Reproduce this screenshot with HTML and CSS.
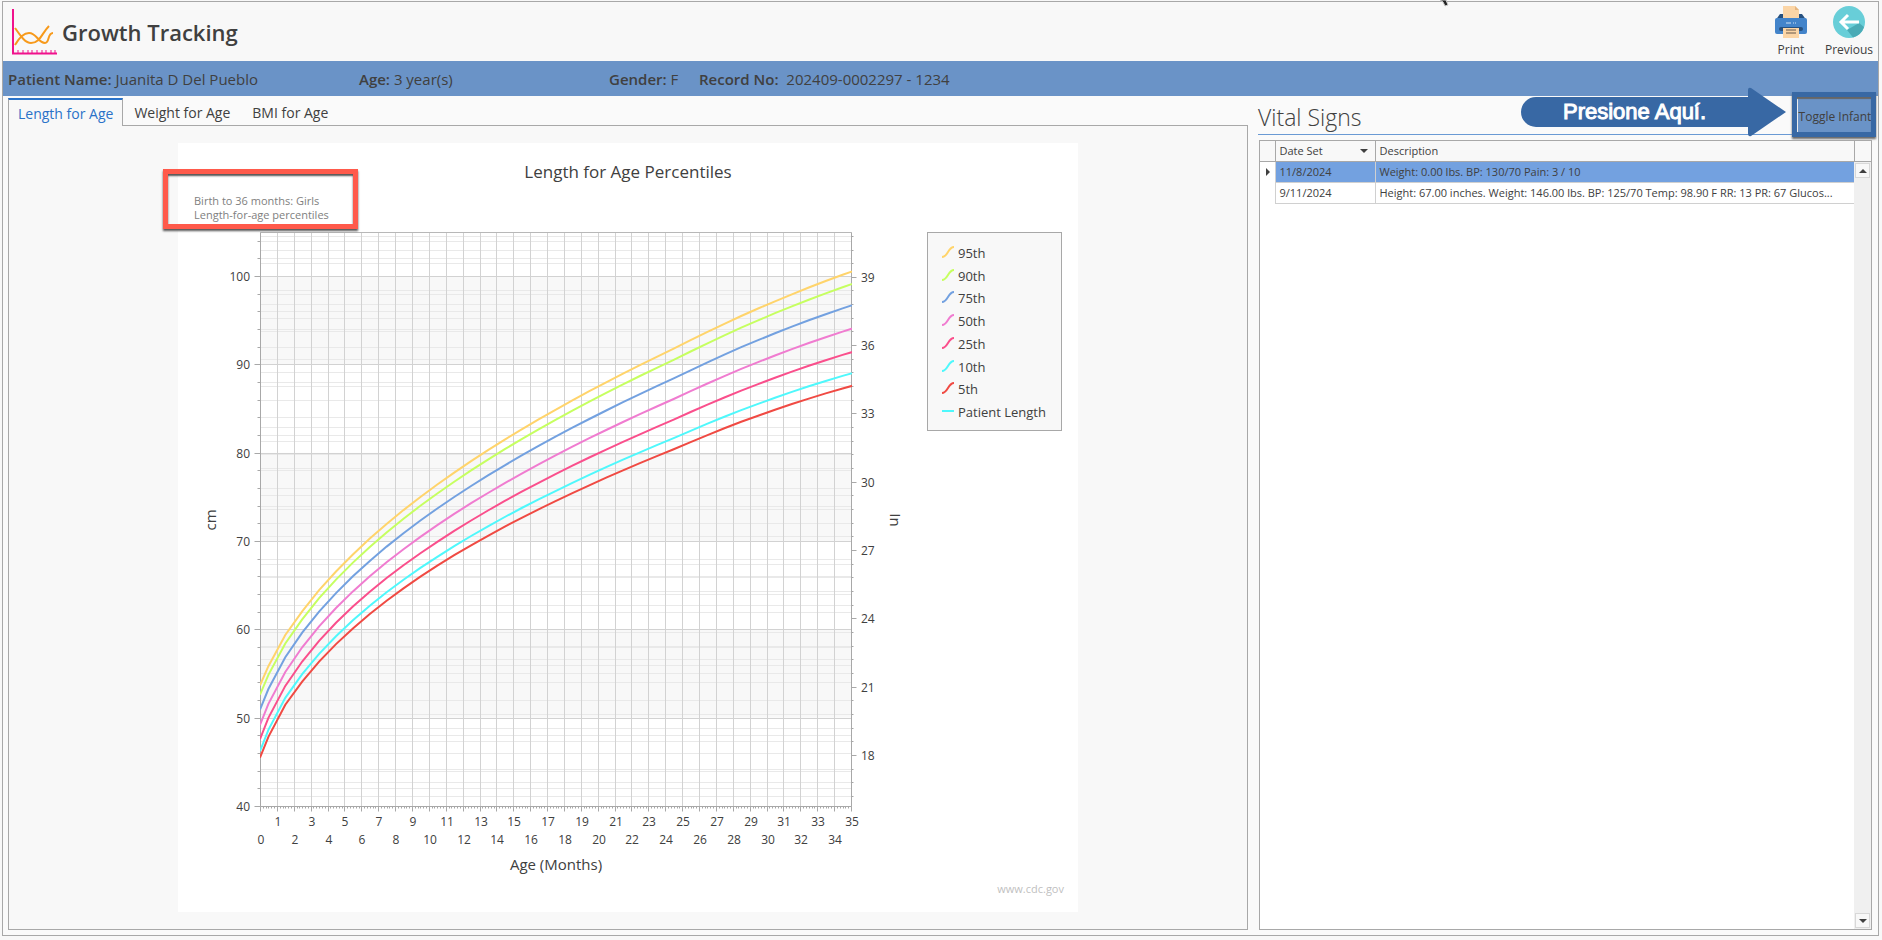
FILE: index.html
```html
<!DOCTYPE html>
<html lang="en">
<head>
<meta charset="utf-8">
<title>Growth Tracking</title>
<link rel="stylesheet" href="styles.css">
</head>
<body>
<div class="window">
    <header class="header">
        <svg class="logo" width="46" height="46" viewBox="0 0 46 46">
            <path d="M1 0V44.500H45" fill="none" stroke="#f0128c" stroke-width="2"/>
            <path d="M6 41v4M11 41v4M16 41v4M20 41v4M25 41v4M30 41v4M34 41v4M39 41v4M43 41v4" stroke="#f0128c" stroke-width="1"/>
            <path d="M3 19C8 26 13 34 19 34C28 34 30 24 37 17M3 36C7 29 11 24 17 24C25 24 26 34 33 34C38 34 35 24 41 24" fill="none" stroke="#f79a1c" stroke-width="2"/>
        </svg>
        <h1>Growth Tracking</h1>
        <button class="tool">
            <svg width="32" height="32" viewBox="0 0 32 32">
                <path d="M5 8h22l5 7H0z" fill="#27517f"/>
                <path d="M8 0h12l4 4v8H8z" fill="#fbd5a6"/>
                <path d="M20 0v4h4z" fill="#e5b57f"/>
                <path d="M0 14q0-2 2-2h28q2 0 2 2v12q0 2-2 2H2q-2 0-2-2z" fill="#4384ca"/>
                <path d="M11 17h5M18 17h1M20 17h1" stroke="#cfe2f5"/>
                <rect x="4" y="21" width="24" height="4" rx="2" fill="#27517f"/>
                <path d="M8 22h16v10H8z" fill="#fbd5a6"/>
                <path d="M11 24h10M11 27h10" stroke="#66594c"/>
            </svg>
            Print
        </button>
        <button class="tool">
            <svg width="32" height="32" viewBox="0 0 32 32">
                <circle cx="16" cy="16" r="16" fill="#68ced8"/>
                <path d="M14 24L26 17L31 21A16 16 0 0 1 20 31.500z" fill="#4aabb6"/>
                <path d="M26 16H8M15 9L8 16L15 23" fill="none" stroke="#fff" stroke-width="3"/>
            </svg>
            Previous
        </button>
    </header>

    <div class="patient-bar">
        <div class="patient-name"><b>Patient Name:</b> Juanita D Del Pueblo</div>
        <div class="patient-age"><b>Age:</b> 3 year(s)</div>
        <div class="patient-gender"><b>Gender:</b> F</div>
        <div><b>Record No:</b>&nbsp; 202409-0002297 - 1234</div>
    </div>

    <main class="content">
        <section class="charts">
            <nav class="tabs">
                <button class="tab active">Length for Age</button>
                <button class="tab">Weight for Age</button>
                <button class="tab">BMI for Age</button>
            </nav>
            <div class="pane">
                <div class="card">
                    <svg id="chart" viewBox="0 0 900 769"></svg>
                    <div class="mark"></div>
                </div>
            </div>
        </section>

        <section class="vitals">
            <div class="vitals-head">
                <h2>Vital Signs</h2>
                <button class="toggle">Toggle Infant</button>
                <div class="toggle-mark"></div>
                <div class="callout">
                    <svg width="267" height="50" viewBox="0 0 267 50">
                        <path d="M16 10H228V3Q228 0 231 1L266 25L231 49Q228 50 228 46V40H16A15 15 0 0 1 16 10z" fill="#3868a4"/>
                    </svg>
                    <span>Presione Aquí.</span>
                </div>
            </div>
            <div class="grid">
                <table>
                    <thead>
                        <tr>
                            <th class="pointer"></th>
                            <th class="date">Date Set <i class="down"></i></th>
                            <th>Description</th>
                            <th class="end"></th>
                        </tr>
                    </thead>
                    <tbody>
                        <tr class="selected">
                            <td class="pointer"><i class="right"></i></td>
                            <td>11/8/2024</td>
                            <td>Weight: 0.00 lbs. BP: 130/70 Pain: 3 / 10</td>
                            <td class="end"></td>
                        </tr>
                        <tr>
                            <td class="pointer"></td>
                            <td>9/11/2024</td>
                            <td>Height: 67.00 inches. Weight: 146.00 lbs. BP: 125/70 Temp: 98.90 F RR: 13 PR: 67 Glucos...</td>
                            <td class="end"></td>
                        </tr>
                    </tbody>
                </table>
                <div class="scrollbar">
                    <button aria-label="Scroll up"><i class="up"></i></button>
                    <button aria-label="Scroll down"><i class="down"></i></button>
                </div>
            </div>
        </section>
    </main>
</div>
<svg class="cursor" width="12" height="7" viewBox="0 0 12 7"><path d="M2 0L5 2L7 6L10 5L8 0z" fill="#222" stroke="#ccc"/></svg>
<script src="chart.js"></script>
</body>
</html>
```
FILE: styles.css
```css
* {
    box-sizing: border-box;
}

body {
    margin: 0;
    min-height: 100vh;
    padding: 1px 3px 4px 2px;
    display: flex;
    background: #f8f8f8;
    color: #404040;
    font-family: "Open Sans", "Noto Sans", sans-serif;
    font-size: 12px;
}

button {
    font: inherit;
    color: inherit;
    border: 0;
    padding: 0;
    background: none;
    cursor: pointer;
}

.window {
    flex: 1;
    min-width: 0;
    display: flex;
    flex-direction: column;
    border: 1px solid #a8a8a8;
    background: #fafafa;
}

.header {
    display: flex;
    align-items: flex-start;
    height: 59px;
    padding: 4px 0 0 9px;
    background: #f8f8f8;
}

.logo {
    margin-top: 3px;
}

.header h1 {
    flex: 1;
    margin: 9px 0 0 4px;
    font-size: 22px;
    line-height: 34px;
    font-weight: 600;
}

.tool {
    width: 58px;
    display: flex;
    flex-direction: column;
    align-items: center;
    gap: 2px;
    line-height: 20px;
}

.patient-bar {
    display: flex;
    align-items: center;
    height: 35px;
    padding: 0 5px;
    background: #6a93c7;
    font-size: 15px;
    white-space: nowrap;
}

.patient-bar b {
    font-weight: 600;
}

.patient-name {
    width: 351px;
}

.patient-age {
    width: 250px;
}

.patient-gender {
    width: 90px;
}

.content {
    flex: 1;
    display: flex;
    gap: 10px;
    padding: 2px 5px 5px;
}

.charts {
    flex: 1240;
    min-width: 0;
    display: flex;
    flex-direction: column;
}

.tabs {
    display: flex;
    height: 28px;
}

.tab {
    padding: 0 11px;
    font-size: 14px;
}

.tab.active {
    height: 28px;
    margin-bottom: -1px;
    padding: 0 9px;
    border: 1px solid #a8a8a8;
    border-top: 2px solid #2a72c8;
    border-bottom: 0;
    background: #f8f8f8;
    color: #2a72c8;
    position: relative;
}

.pane {
    flex: 1;
    margin-top: -1px;
    padding: 17px 0 16px;
    border: 1px solid #a8a8a8;
    background: #f8f8f8;
}

.card {
    position: relative;
    max-width: 900px;
    margin: 0 auto;
    background: #fff;
}

.card svg {
    display: block;
    width: 100%;
}

/* highlight around the chart subtitle */
.mark {
    position: absolute;
    left: -15px;
    top: 26px;
    width: 195px;
    height: 60px;
    border: 5px solid #ff5a4b;
    box-shadow: 0 2px 2px #555, inset 0 2px 2px #555;
}

.axis-label {
    font-size: 12px;
    fill: #404040;
}

.axis-title {
    font-size: 15px;
    fill: #404040;
}

.chart-title {
    font-size: 17px;
    fill: #404040;
}

.sub-title {
    font-size: 11px;
    fill: #808080;
}

.source {
    font-size: 11px;
    fill: #bfbfbf;
}

.legend {
    font-size: 13px;
    fill: #404040;
}

.vitals {
    flex: 615;
    min-width: 0;
    display: flex;
    flex-direction: column;
}

.vitals-head {
    position: relative;
    display: flex;
    justify-content: space-between;
    height: 37px;
    margin-bottom: 5px;
    padding-right: 1px;
    border-bottom: 1px solid #6a9ad4;
}

.vitals-head h2 {
    margin: 0;
    font-size: 23px;
    line-height: 38px;
    font-weight: 300;
}

.toggle {
    width: 74px;
    height: 36px;
    background: #6a93c7;
    font-size: 12px;
    white-space: nowrap;
}

.toggle-mark {
    position: absolute;
    right: -3px;
    top: -6px;
    width: 84px;
    height: 45px;
    border: 5px solid #3868a4;
    box-shadow: 0 2px 2px #666, inset 0 2px 1px #666;
    pointer-events: none;
}

.callout {
    position: absolute;
    right: 86px;
    top: -11px;
    height: 50px;
}

.callout span {
    position: absolute;
    left: 43px;
    top: 10px;
    color: #fff;
    font-family: "Liberation Sans", sans-serif;
    font-size: 22px;
    line-height: 30px;
    -webkit-text-stroke: 1px #fff;
    white-space: nowrap;
}

.grid {
    flex: 1;
    position: relative;
    margin: 0 1px;
    border: 1px solid #a8a8a8;
    background: #fff;
}

table {
    width: 100%;
    table-layout: fixed;
    border-collapse: collapse;
}

th,
td {
    height: 21px;
    padding: 0 4px;
    overflow: hidden;
    border: 1px solid #d0d0d0;
    border-top: 0;
    font-weight: 400;
    font-size: 11px;
    line-height: 20px;
    text-align: left;
    white-space: nowrap;
    text-overflow: ellipsis;
}

th {
    height: 20px;
    border-color: #a8a8a8;
    background: #f8f8f8;
    line-height: 19px;
}

th:first-child,
td:first-child {
    border-left: 0;
}

.pointer {
    width: 15px;
    padding: 0 0 0 6px;
    text-overflow: clip;
}

.date {
    width: 100px;
}

.date .down {
    float: right;
    margin: 8px 3px 0;
}

.end {
    width: 17px;
    border-right: 0;
}

td.pointer,
td.end {
    border-bottom: 0;
}

.selected td {
    background: #73a1e0;
}

.selected td.pointer {
    background: #fff;
}

.up,
.down,
.right {
    display: inline-block;
    border: 4px solid transparent;
}

.up {
    border-top: 0;
    border-bottom-color: #404040;
}

.down {
    border-bottom: 0;
    border-top-color: #404040;
}

.right {
    border-right: 0;
    border-left-color: #404040;
}

.scrollbar {
    position: absolute;
    right: 0;
    top: 21px;
    bottom: 0;
    width: 17px;
    padding: 1px;
    display: flex;
    flex-direction: column;
    justify-content: space-between;
    background: #f0f0f0;
}

.scrollbar button {
    display: flex;
    align-items: center;
    justify-content: center;
    height: 15px;
    border: 1px solid #d8d8d8;
    background: #f8f8f8;
}

.cursor {
    position: absolute;
    left: 1438px;
    top: 0;
}
```
FILE: chart.js
```js
const chart = document.getElementById("chart");

const plot = { left: 82, right: 673, top: 89, bottom: 663 };

// median length in cm at 0, 0.5, 1.5 ... 35.5 months
const median = [49.29, 51.68, 55.29, 58.09, 60.46, 62.54, 64.41, 66.12, 67.71, 69.19,
    70.59, 71.92, 73.19, 74.40, 75.56, 76.68, 77.76, 78.80, 79.81, 80.80, 81.76, 82.69,
    83.60, 84.48, 85.35, 86.20, 87.09, 87.96, 88.80, 89.61, 90.38, 91.13, 91.85, 92.54,
    93.20, 93.83, 94.43];

// [month, deviation, skew]
const spread = [[0, 2.49, 0.144], [0.5, 2.43, 0.1], [1.5, 2.4, 0.09], [2.5, 2.42, 0.03],
    [5, 2.52, 0], [9, 2.72, 0], [18, 3.17, 0], [36, 3.98, 0]];

const series = [
    { name: "95th", z: 1.645, color: "#ffd46b" },
    { name: "90th", z: 1.282, color: "#c6ff60" },
    { name: "75th", z: 0.674, color: "#73a1e0" },
    { name: "50th", z: 0, color: "#f07cd0" },
    { name: "25th", z: -0.674, color: "#fa4f8c" },
    { name: "10th", z: -1.282, color: "#4ff8fc" },
    { name: "5th", z: -1.645, color: "#f04a43" },
];

let html = "";

function x(month) {
    return plot.left + month * (plot.right - plot.left) / 35;
}

function y(cm) {
    return plot.bottom - (cm - 40) * (plot.bottom - plot.top) / 65;
}

function yInch(inch) {
    return 612 - (inch - 18) * 22.77;
}

function line(x1, y1, x2, y2, color) {
    html += `<path d="M${Math.round(x1) + 0.5} ${Math.round(y1) + 0.5}L${Math.round(x2) + 0.5} ${Math.round(y2) + 0.5}" stroke="${color}"/>`;
}

function text(tx, ty, value, cls, anchor = "middle", extra = "") {
    html += `<text x="${tx}" y="${ty}" class="${cls}" text-anchor="${anchor}" ${extra}>${value}</text>`;
}

function length(month, i, z) {
    let n = 1;
    while (spread[n][0] < month) n++;
    const [m0, d0, s0] = spread[n - 1];
    const [m1, d1, s1] = spread[n];
    const t = (month - m0) / (m1 - m0);
    return median[i] + z * (d0 + t * (d1 - d0)) + z * z * (s0 + t * (s1 - s0));
}

// bands
for (const cm of [60, 80, 100]) {
    html += `<rect x="${plot.left}" y="${y(cm)}" width="${plot.right - plot.left}" height="${y(cm - 10) - y(cm)}" fill="#f8f8f8"/>`;
}

// minor lines and ticks
for (let cm = 42; cm < 105; cm += 2) {
    if (cm % 10) {
        line(plot.left, y(cm), plot.right, y(cm), "#e9e9e9");
        line(plot.left - 3, y(cm), plot.left, y(cm), "#a8a8a8");
    }
}
for (let i = -3; i < 39; i++) {
    const py = yInch(18 + i * 0.6);
    if (i % 5) {
        line(plot.left, py, plot.right, py, "#e9e9e9");
        line(plot.right, py, plot.right + 2, py, "#a8a8a8");
    } else {
        line(plot.right, py, plot.right + 5, py, "#a8a8a8");
        text(683, Math.round(py) + 5, 18 + i * 0.6, "axis-label", "start");
    }
}

// major lines
for (let cm = 40; cm <= 100; cm += 10) {
    line(plot.left, y(cm), plot.right, y(cm), "#d2d2d2");
    line(plot.left - 6, y(cm), plot.left, y(cm), "#a8a8a8");
    text(72, Math.round(y(cm)) + 5, cm, "axis-label", "end");
}
for (let m = 0; m <= 35; m++) {
    line(x(m), plot.top, x(m), plot.bottom, "#d2d2d2");
    line(x(m), plot.bottom, x(m), plot.bottom + 5, "#a8a8a8");
    text(Math.round(x(m)) + 1, m % 2 ? 683 : 701, m, "axis-label");
    for (let k = 1; k < 6 && m < 35; k++) {
        line(x(m + k / 6), plot.bottom, x(m + k / 6), plot.bottom + 2, "#a8a8a8");
    }
}
line(plot.left, plot.top, plot.right, plot.top, "#b8b8b8");
line(plot.left, plot.top, plot.left, plot.bottom, "#a8a8a8");
line(plot.right, plot.top, plot.right, plot.bottom, "#a8a8a8");
line(plot.left, plot.bottom, plot.right, plot.bottom, "#a8a8a8");

// percentile curves
html += `<clipPath id="area"><rect x="${plot.left}" y="${plot.top}" width="${plot.right - plot.left + 1}" height="${plot.bottom - plot.top}"/></clipPath>`;
for (const s of series) {
    const points = median.map((m, i) => {
        const month = i ? i - 0.5 : 0;
        return `${x(month).toFixed(1)},${(y(length(month, i, s.z)) + 1).toFixed(1)}`;
    });
    html += `<polyline points="${points.join(" ")}" fill="none" stroke="${s.color}" stroke-width="2" clip-path="url(#area)"/>`;
}

// legend
html += `<rect x="749.5" y="89.5" width="134" height="198" fill="#f8f8f8" stroke="#a8a8a8"/>`;
series.forEach((s, i) => {
    const top = 103 + Math.round(i * 22.7);
    html += `<path d="M764 ${top + 11}C770 ${top + 11} 770 ${top + 1} 776 ${top + 1}" fill="none" stroke="${s.color}" stroke-width="2"/>`;
    text(780, top + 12, s.name, "legend", "start");
});
html += `<path d="M764 268H776" stroke="#4ff8fc" stroke-width="2"/>`;
text(780, 274, "Patient Length", "legend", "start");

text(450, 35, "Length for Age Percentiles", "chart-title");
text(16, 62, "Birth to 36 months: Girls", "sub-title", "start");
text(16, 76, "Length-for-age percentiles", "sub-title", "start");
text(378, 727, "Age (Months)", "axis-title");
text(0, 0, "cm", "axis-title", "middle", `transform="translate(38 377) rotate(-90)"`);
text(0, 0, "In", "axis-title", "middle", `transform="translate(712 377) rotate(90)"`);
text(886, 750, "www.cdc.gov", "source", "end");

chart.innerHTML = html;
```
